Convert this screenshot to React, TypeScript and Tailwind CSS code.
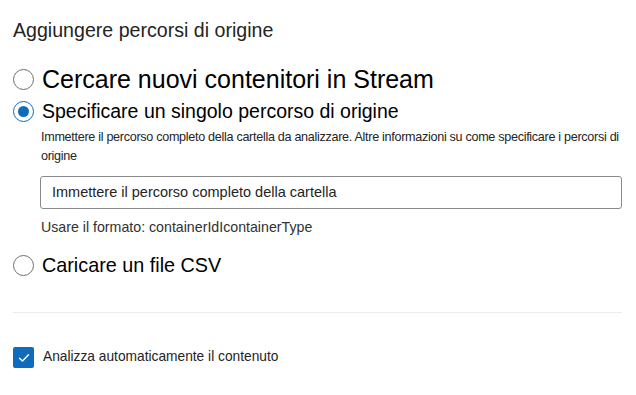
import React from "react";

function Radio({ checked }: { checked?: boolean }) {
  return checked ? (
    <span className="flex h-[21px] w-[21px] shrink-0 items-center justify-center rounded-full border border-[#0f6cbd] bg-white">
      <span className="h-[11px] w-[11px] rounded-full bg-[#0f6cbd]" />
    </span>
  ) : (
    <span className="h-[21px] w-[21px] shrink-0 rounded-full border border-[#707070] bg-white" />
  );
}

export default function App() {
  return (
    <div
      className="w-[636px] h-[395px] bg-white pl-[13px] pr-[14px] text-[#242424]"
      style={{ fontFamily: '"Liberation Sans", Arial, sans-serif' }}
    >
      <div className="pt-[18px] h-[42px] text-[19.6px] leading-[24px]">Aggiungere percorsi di origine</div>
      <div className="mt-[21px] flex h-[32px] items-center gap-[8px]">
        <Radio />
        <span className="text-[25px] leading-[32px] text-black">Cercare nuovi contenitori in Stream</span>
      </div>
      <div className="flex h-[32px] items-center gap-[8px]">
        <Radio checked />
        <span className="text-[19.5px] leading-[32px] text-black">Specificare un singolo percorso di origine</span>
      </div>
      <div className="ml-[28px] mt-[1px] text-[12.6px] leading-[19px] tracking-[-0.3px] text-[#242424]">
        Immettere il percorso completo della cartella da analizzare. Altre informazioni su come specificare i percorsi di origine
      </div>
      <div className="ml-[27px] mt-[10px] flex h-[33px] items-center rounded-[3px] border border-[#8a8a8a] px-[11px] text-[14.5px] text-[#242424]">
        Immettere il percorso completo della cartella
      </div>
      <div className="ml-[28px] mt-[9px] h-[18px] text-[14.2px] leading-[18px] text-[#323130]">
        Usare il formato: containerIdIcontainerType
      </div>
      <div className="mt-[13px] flex h-[32px] items-center gap-[8px]">
        <Radio />
        <span className="text-[19.8px] leading-[32px] text-black">Caricare un file CSV</span>
      </div>
      <div className="mt-[31px] h-px bg-[#edebe9]" />
      <div className="mt-[34px] flex h-[21px] items-center gap-[9px]">
        <span className="flex h-[21px] w-[21px] items-center justify-center rounded-[2px] bg-[#0f6cbd]">
          <svg width="12" height="10" viewBox="0 0 12 10" fill="none">
            <path d="M1.5 5.2 L4.5 8 L10.5 1.8" stroke="white" strokeWidth="1.4" strokeLinecap="round" strokeLinejoin="round" />
          </svg>
        </span>
        <span className="text-[13.75px] text-[#242424]">Analizza automaticamente il contenuto</span>
      </div>
    </div>
  );
}
